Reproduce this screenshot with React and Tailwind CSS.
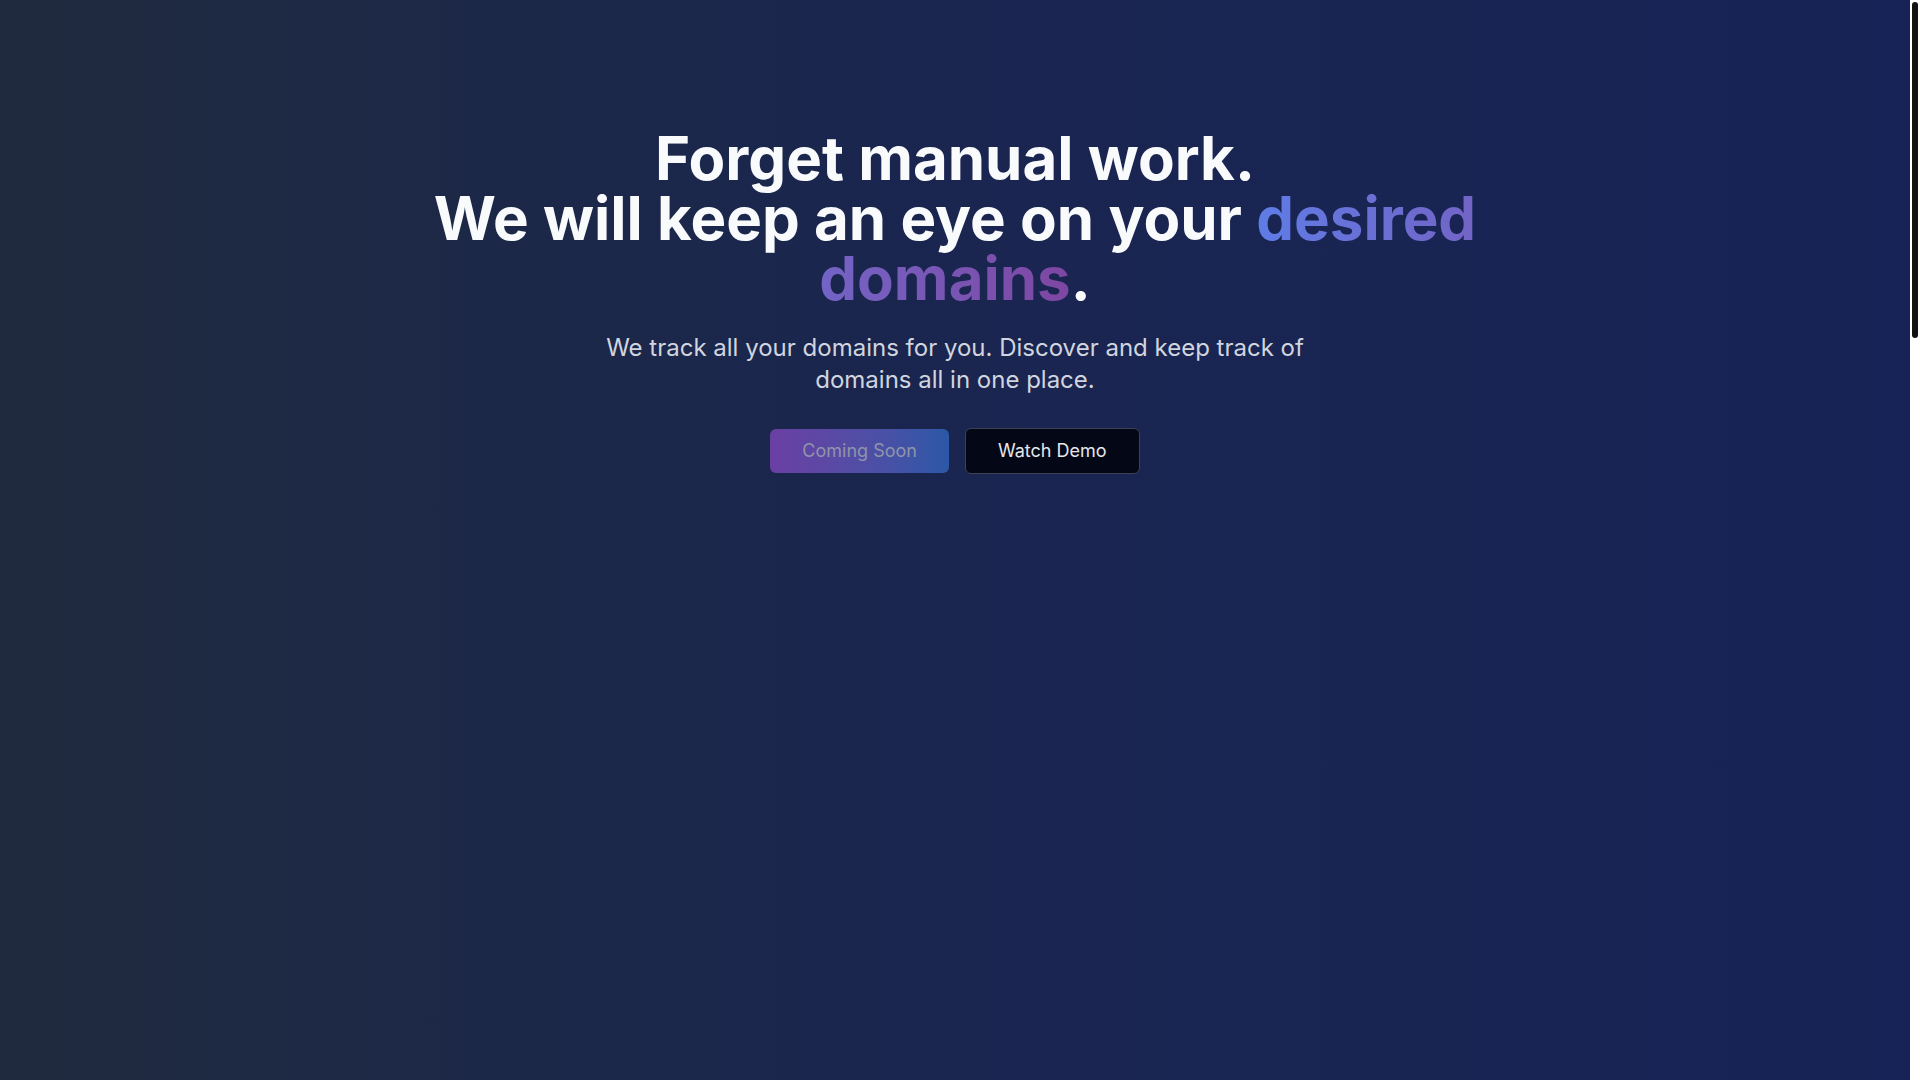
export default function App() {
    return (
        <div className="min-h-screen pr-[10px] bg-white" style={{ fontFamily: "Inter, 'Noto Sans', sans-serif" }}>
            <main className="min-h-[3450px] bg-gradient-to-r from-[#1f2a3e] via-[#1a2550] to-[#172356]">
                <section className="flex flex-col items-center px-6 pt-32 text-center">
                    <h1 className="max-w-6xl text-6xl font-bold leading-none text-[#f8fafc]">
                        Forget manual work.
                        <br />
                        We will keep an eye on your{" "}
                        <span className="bg-gradient-to-r from-[#5e7ce6] to-[#7e46a2] bg-clip-text text-transparent">
                            desired domains
                        </span>
                        .
                    </h1>

                    <p className="mt-6 max-w-3xl text-2xl leading-8 text-[#d1d5df]">
                        We track all your domains for you. Discover and keep track of domains all in one place.
                    </p>

                    <div className="mt-8 flex items-center justify-center gap-4">
                        <button
                            disabled
                            className="rounded-md bg-gradient-to-r from-[#6a3fa3] to-[#2b58a7] px-8 py-2 text-lg text-[#8f95ab]"
                        >
                            Coming Soon
                        </button>
                        <button className="rounded-md border border-[#3b4253] bg-[#040816] px-8 py-2 text-lg text-[#e5e7eb]">
                            Watch Demo
                        </button>
                    </div>
                </section>
            </main>

            {/* page scrollbar as the browser draws it */}
            <div className="fixed right-0 top-0 h-screen w-[10px] bg-white p-[2px]">
                <div className="h-[336px] w-full rounded-full bg-[#121212]" />
            </div>
        </div>
    );
}
